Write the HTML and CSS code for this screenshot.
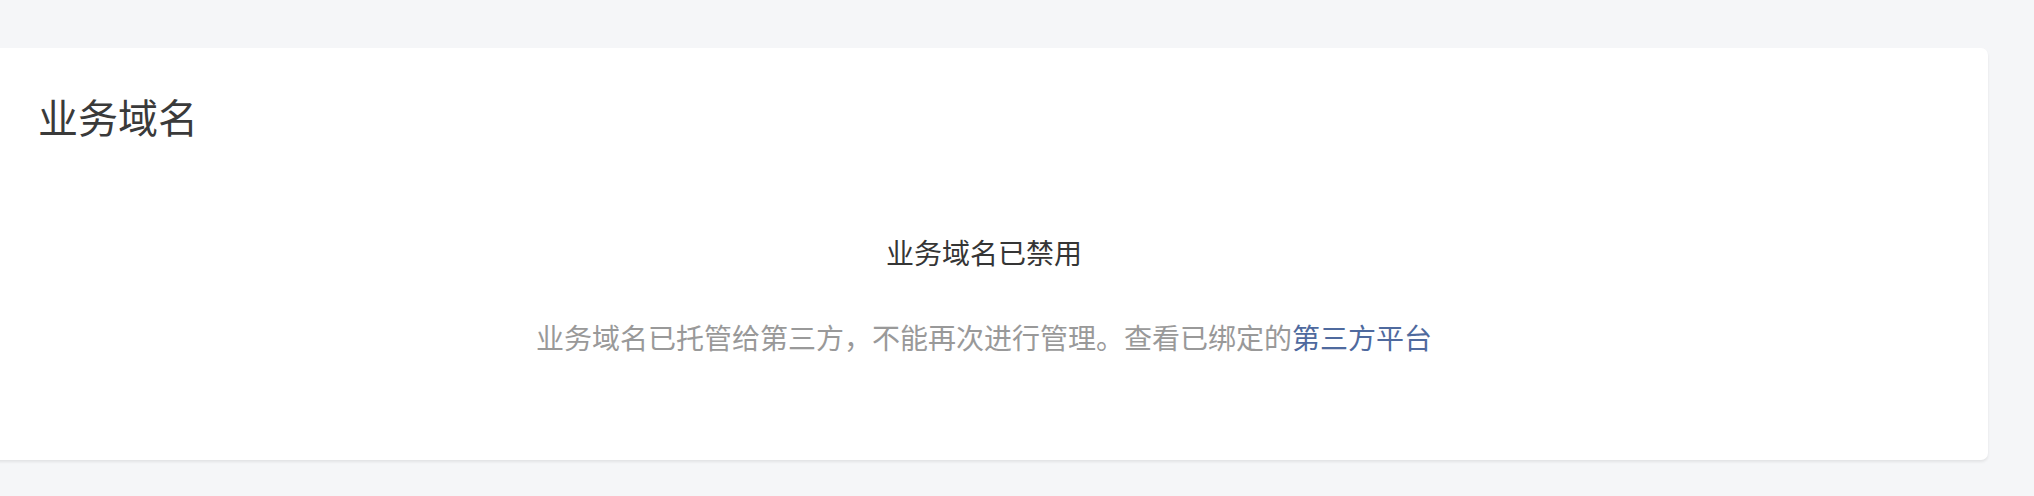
FILE: index.html
```html
<!DOCTYPE html>
<html lang="zh-CN">
<head>
    <meta charset="UTF-8">
    <title>业务域名</title>
    <link rel="stylesheet" href="styles.css">
</head>
<body>
    <main class="page">
        <section class="card">
            <h2 class="card-title">业务域名</h2>
            <div class="empty">
                <p class="empty-title">业务域名已禁用</p>
                <p class="empty-desc">业务域名已托管给第三方，不能再次进行管理。查看已绑定的<a href="#" class="link">第三方平台</a></p>
            </div>
        </section>
    </main>
</body>
</html>
```

FILE: styles.css
```css
html, body {
    margin: 0;
    padding: 0;
    background-color: #f5f6f8;
    font-family: "Noto Sans CJK SC", "Noto Sans", sans-serif;
}

.page {
    padding: 48px 46px 36px 0;
    overflow: hidden;
}

.card {
    margin-left: -20px;
    height: 412px;
    box-sizing: border-box;
    background-color: #fff;
    border-radius: 7px;
    box-shadow: 0 2px 3px rgba(0, 0, 0, 0.08);
    padding: 42px 58px;
}

.card-title {
    margin: 0;
    font-size: 40px;
    font-weight: normal;
    line-height: 52px;
    color: #3a3a3a;
}

.empty {
    text-align: center;
    padding-top: 90px;
}

.empty-title {
    margin: 0;
    font-size: 28px;
    line-height: 40px;
    color: #353535;
}

.empty-desc {
    margin: 45px 0 0;
    font-size: 28px;
    line-height: 40px;
    color: #999;
}

.link {
    color: #4f6a9e;
    text-decoration: none;
}
```
